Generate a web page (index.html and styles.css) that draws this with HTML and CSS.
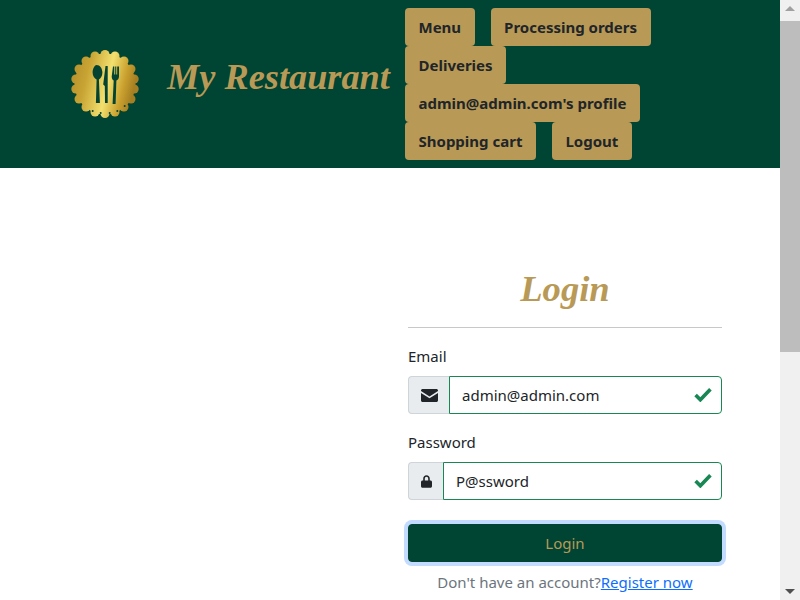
FILE: index.html
```html
<!DOCTYPE html>
<html lang="en">
<head>
<meta charset="utf-8">
<title>My Restaurant - Login</title>
<link rel="stylesheet" href="styles.css">
</head>
<body>
<div class="page">
  <div class="main">
    <header class="header">
      <div class="brand">
        <svg class="logo" width="68" height="68" viewBox="0 0 68 68" aria-hidden="true">
          <defs>
            <linearGradient id="gold" gradientUnits="userSpaceOnUse" x1="0" y1="0" x2="68" y2="16">
              <stop offset="0" stop-color="#b08a28"/>
              <stop offset="0.3" stop-color="#c8a434"/>
              <stop offset="0.62" stop-color="#f2e06e"/>
              <stop offset="0.85" stop-color="#c9a02e"/>
              <stop offset="1" stop-color="#a67f22"/>
            </linearGradient>
          </defs>
          <g fill="url(#gold)">
            <circle cx="34" cy="34" r="30.500"/>
            <circle cx="34" cy="4.500" r="4.500"/><circle cx="44" cy="6" r="4.500"/><circle cx="53" cy="11" r="4.500"/><circle cx="60" cy="19" r="4.500"/><circle cx="63.200" cy="29" r="4.500"/><circle cx="63.200" cy="39" r="4.500"/><circle cx="60" cy="49" r="4.500"/><circle cx="53" cy="57" r="4.500"/><circle cx="44" cy="62" r="4.500"/><circle cx="34" cy="63.500" r="4.500"/><circle cx="24" cy="62" r="4.500"/><circle cx="15" cy="57" r="4.500"/><circle cx="8" cy="49" r="4.500"/><circle cx="4.800" cy="39" r="4.500"/><circle cx="4.800" cy="29" r="4.500"/><circle cx="8" cy="19" r="4.500"/><circle cx="15" cy="11" r="4.500"/><circle cx="24" cy="6" r="4.500"/>
          </g>
          <g fill="#044331">
            <path d="M25.500 15c3.500 0 5.900 3.500 5.900 7.500 0 3.500-1.900 6-3.500 7l1 23.500h-4l.7-23.500c-2-1-4-3.500-4-7 0-4 2.400-7.500 3.900-7.500z"/>
            <path d="M34.500 16h2.200v37h-2.700l-.2-17-1.600-1.500z"/>
            <path d="M42 16.500h1.300v8h.9v-8h1.100v8h.9v-8h1.800v10c0 2.300-1.400 3.500-2.600 4l-.8 23.500h-3l1.100-23.500c-1-.5-2-1.700-2-4z"/>
            <circle cx="21.700" cy="61" r="1"/><circle cx="29.700" cy="63" r="1"/><circle cx="38.700" cy="63" r="1"/><circle cx="46.300" cy="61" r="1"/><circle cx="53.700" cy="56" r="1"/>
          </g>
        </svg>
        <h1 class="brand-title">My Restaurant</h1>
      </div>
      <nav class="nav">
        <a class="nav-btn" href="#">Menu</a>
        <a class="nav-btn" href="#">Processing orders</a>
        <a class="nav-btn" href="#">Deliveries</a>
        <a class="nav-btn" href="#">admin@admin.com's profile</a>
        <a class="nav-btn" href="#">Shopping cart</a>
        <a class="nav-btn" href="#">Logout</a>
      </nav>
    </header>
    <section class="content">
      <form class="login">
        <h2 class="login-title">Login</h2>
        <hr class="rule">
        <label class="field-label" for="email">Email</label>
        <div class="input-group">
          <span class="addon addon-mail">
            <svg width="17" height="13" viewBox="0 0 16 13" preserveAspectRatio="none" aria-hidden="true"><path fill="#212529" d="M1.500 0h13C15.300 0 16 .7 16 1.500v.6L8 7.500 0 2.100v-.6C0 .7.700 0 1.500 0zM0 4l8 5.300L16 4v7.500c0 .8-.7 1.500-1.500 1.500h-13C.7 13 0 12.300 0 11.500z"/></svg>
          </span>
          <input class="control" id="email" type="text" value="admin@admin.com">
          <svg class="check" width="18" height="15" viewBox="0 0 17 14" aria-hidden="true"><path fill="none" stroke="#198754" stroke-width="3.400" d="M1.500 7.500l4.500 4.500L15.500 2"/></svg>
        </div>
        <label class="field-label" for="password">Password</label>
        <div class="input-group">
          <span class="addon addon-lock">
            <svg width="11" height="13" viewBox="0 0 11 13" aria-hidden="true"><path fill="#212529" d="M2.200 5.500V3.700C2.200 1.700 3.600.2 5.500.2s3.300 1.500 3.300 3.500v1.800h.7c.8 0 1.500.7 1.500 1.500v4.300c0 .8-.7 1.500-1.500 1.500h-8C.7 12.800 0 12.100 0 11.300V7c0-.8.700-1.500 1.500-1.500zm1.600 0h3.400V3.700c0-1.100-.7-1.900-1.700-1.900s-1.700.8-1.700 1.900z"/></svg>
          </span>
          <input class="control" id="password" type="text" value="P@ssword">
          <svg class="check" width="18" height="15" viewBox="0 0 17 14" aria-hidden="true"><path fill="none" stroke="#198754" stroke-width="3.400" d="M1.500 7.500l4.500 4.500L15.500 2"/></svg>
        </div>
        <button class="submit" type="button">Login</button>
        <p class="register">Don't have an account?<a href="#">Register now</a></p>
      </form>
    </section>
  </div>
  <div class="scrollbar" aria-hidden="true">
    <span class="arrow arrow-up"></span>
    <span class="thumb"></span>
    <span class="arrow arrow-down"></span>
  </div>
</div>
</body>
</html>
```
FILE: styles.css
```css
* { box-sizing: border-box; }
html, body { margin: 0; height: 100%; overflow: hidden; }
body {
  font-family: "Noto Sans", "Open Sans", sans-serif;
  font-size: 16px;
  color: #212529;
  background: #fff;
}
.page { display: flex; height: 600px; }
.main { width: 780px; flex: none; overflow: hidden; }
.header {
  display: flex;
  height: 168px;
  background: #004433;
}
.brand {
  width: 405px;
  flex: none;
  display: flex;
  align-items: center;
  padding: 0 0 0 71px;
}
.logo { flex: none; }
.brand-title {
  margin: 0 0 14px 28px;
  font: italic bold 36.3px "Liberation Serif", serif;
  color: #b89a56;
  white-space: nowrap;
}
.nav {
  width: 300px;
  flex: none;
  display: flex;
  flex-wrap: wrap;
  align-content: flex-start;
  padding-top: 8px;
  gap: 0 16px;
}
.nav-btn {
  height: 38px;
  padding: 0 13.5px;
  display: flex;
  align-items: center;
  background: #b89a56;
  color: #212529;
  font-weight: 700;
  font-size: 15px;
  text-decoration: none;
  border-radius: 4px;
}
.content { padding: 0 0 0 408px; }
.login { width: 314px; padding-top: 98px; }
.login-title {
  margin: 0;
  font: italic bold 36.6px/46px "Liberation Serif", serif;
  color: #b89a56;
  text-align: center;
}
.rule { margin: 15px 0 16px; border: 0; border-top: 1px solid #c8c8c8; }
.field-label { display: block; height: 24px; line-height: 24px; font-size: 15px; margin-bottom: 8px; }
.input-group { position: relative; display: flex; height: 38px; margin-bottom: 16px; }
.addon {
  display: flex;
  align-items: center;
  justify-content: center;
  background: #e9ecef;
  border: 1px solid #ced4da;
  border-right: 0;
  border-radius: 4px 0 0 4px;
}
.addon-mail { padding: 0 11.5px; }
.addon-lock { padding: 0 11.5px; }
.control {
  flex: 1;
  min-width: 0;
  height: 38px;
  padding: 0 12px;
  border: 1px solid #198754;
  border-radius: 0 4px 4px 0;
  font: 15px "Noto Sans", "Open Sans", sans-serif;
  color: #212529;
  background: #fff;
  outline: 0;
}
.check { position: absolute; right: 10px; top: 11px; }
.submit {
  display: block;
  width: 100%;
  height: 38px;
  margin-top: 24px;
  background: #004433;
  color: #b89a56;
  border: 1px solid #004433;
  border-radius: 4px;
  box-shadow: 0 0 0 4px #c2dbfe;
  font: 15px "Noto Sans", "Open Sans", sans-serif;
}
.register {
  margin: 8px 0 0;
  text-align: center;
  color: #6c757d;
  font-size: 15px;
  line-height: 24px;
}
.register a { color: #0d6efd; }
.scrollbar {
  width: 20px;
  flex: none;
  display: flex;
  flex-direction: column;
  background: #f0f0f0;
}
.thumb { height: 331px; margin-top: 4px; background: #bdbdbd; }
.arrow { display: block; height: 17px; flex: none; position: relative; }
.arrow::after {
  content: "";
  position: absolute;
  left: 5px;
  top: 6px;
  border-left: 5px solid transparent;
  border-right: 5px solid transparent;
}
.arrow-up::after { border-bottom: 5px solid #a0a0a0; }
.arrow-down { margin-top: auto; }
.arrow-down::after { border-top: 5px solid #505050; }
```
